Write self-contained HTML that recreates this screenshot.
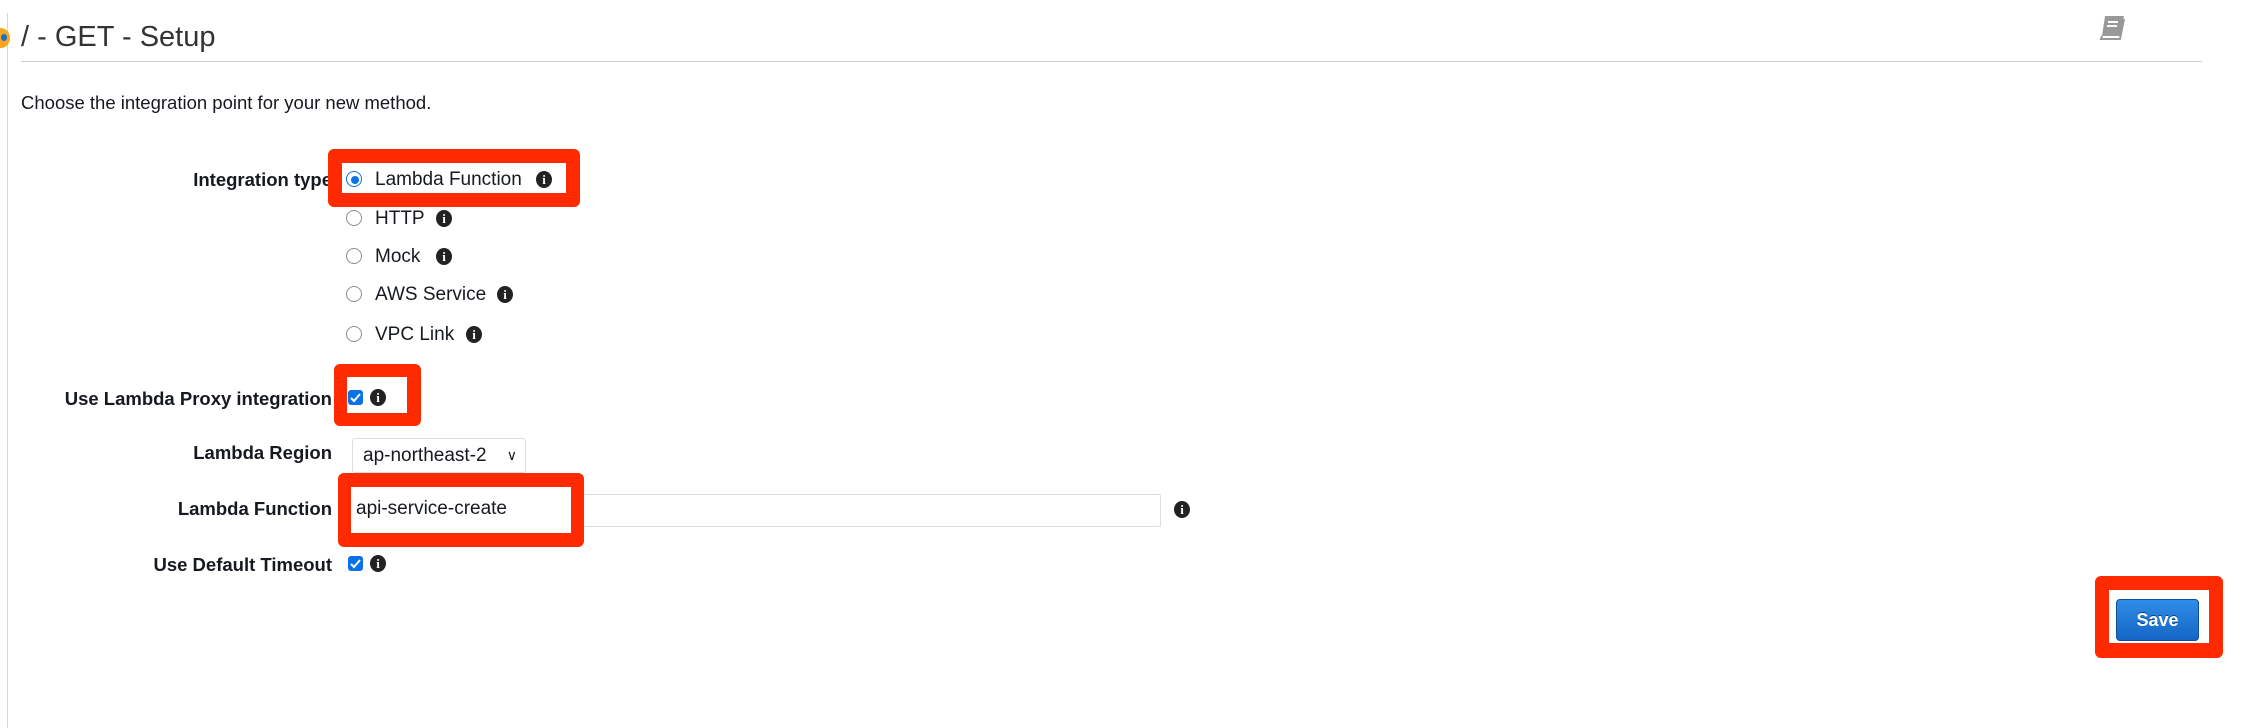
<!DOCTYPE html>
<html><head><meta charset="utf-8"><style>
body{margin:0;width:2264px;height:728px;background:#fff;font-family:"Liberation Sans",Arial,sans-serif;color:#16191f;position:relative;overflow:hidden}
.a{position:absolute}
.lbl{position:absolute;font-weight:bold;font-size:18.5px;text-align:right;width:320px;left:12px;line-height:22px}
.red{position:absolute;border-style:solid;border-color:#ff2a00;border-radius:6px;background:#fff}
.radio{position:absolute;width:14px;height:14px;border:1.5px solid #8d8d99;border-radius:50%;background:#fff}
.opt{position:absolute;font-size:19px;line-height:22px}
.info{position:absolute;width:16px;height:17px;border-radius:50%;background:#222;color:#fff;font:bold 13px/17px "Liberation Serif",serif;text-align:center}
.cb{position:absolute;width:15px;height:15px;border-radius:3px;background:#0a72e8}
.cb svg{position:absolute;left:2px;top:2px}
</style></head><body>
<div class="a" style="left:7px;top:13px;width:1px;height:715px;background:#d5d5d5"></div>
<div class="a" style="left:-8px;top:28px;width:18px;height:20px;border-radius:50%;background:#f5a623"></div>
<div class="a" style="left:1px;top:34px;width:6px;height:7px;border-radius:50%;background:#1a6fd1"></div>
<div class="a" style="left:21px;top:20px;font-size:29px;color:#333;line-height:34px">/ - GET - Setup</div>
<div class="a" style="left:21px;top:61px;width:2181px;height:1px;background:#cfcfcf"></div>
<svg class="a" style="left:2099px;top:14px" width="27" height="27" viewBox="0 0 27 27"><path d="M6 2h19l-4 20H3z" fill="#999"/><path d="M3 22l-1 3h19l4-20" fill="none" stroke="#999" stroke-width="2"/><path d="M9 8h10M8 12h10" stroke="#fff" stroke-width="2"/></svg>
<div class="a" style="left:21px;top:92px;font-size:18.5px;line-height:22px">Choose the integration point for your new method.</div>

<div class="lbl" style="top:169px">Integration type</div>
<div class="red" style="left:328px;top:149px;width:224px;height:30px;border-width:14px 14px 14px 14px"></div>
<div class="radio" style="left:346px;top:171px;border-color:#0a72e8"></div>
<div class="a" style="left:351px;top:176px;width:8px;height:8px;border-radius:50%;background:#0a72e8"></div>
<div class="opt" style="left:375px;top:169px">Lambda Function</div>
<div class="info" style="left:536px;top:171px">i</div>

<div class="radio" style="left:346px;top:210px"></div><div class="opt" style="left:375px;top:208px">HTTP</div><div class="info" style="left:436px;top:210px">i</div>
<div class="radio" style="left:346px;top:248px"></div><div class="opt" style="left:375px;top:246px">Mock</div><div class="info" style="left:436px;top:248px">i</div>
<div class="radio" style="left:346px;top:286px"></div><div class="opt" style="left:375px;top:284px">AWS Service</div><div class="info" style="left:497px;top:286px">i</div>
<div class="radio" style="left:346px;top:326px"></div><div class="opt" style="left:375px;top:324px">VPC Link</div><div class="info" style="left:466px;top:326px">i</div>

<div class="lbl" style="top:388px">Use Lambda Proxy integration</div>
<div class="red" style="left:334px;top:364px;width:60px;height:36px;border-width:13px 14px 13px 13px"></div>
<div class="cb" style="left:348px;top:390px"><svg width="11" height="11"><path d="M1 6l3 3 6-7" stroke="#fff" stroke-width="2" fill="none"/></svg></div>
<div class="info" style="left:370px;top:389px">i</div>

<div class="lbl" style="top:442px">Lambda Region</div>
<div class="a" style="left:352px;top:438px;width:172px;height:33px;border:1px solid #ddd;border-radius:3px;font-size:19px;line-height:33px;text-indent:10px">ap-northeast-2<span style="position:absolute;right:8px;font-size:14px">&#x2228;</span></div>

<div class="lbl" style="top:498px">Lambda Function</div>
<div class="a" style="left:352px;top:494px;width:807px;height:31px;border:1px solid #ddd;border-radius:2px"></div>
<div class="red" style="left:338px;top:473px;width:220px;height:46px;border-width:14px 13px 14px 13px"></div>
<div class="a" style="left:356px;top:498px;font-size:19px;line-height:22px">api-service-create</div>
<div class="info" style="left:1174px;top:501px">i</div>

<div class="lbl" style="top:554px">Use Default Timeout</div>
<div class="cb" style="left:348px;top:556px"><svg width="11" height="11"><path d="M1 6l3 3 6-7" stroke="#fff" stroke-width="2" fill="none"/></svg></div>
<div class="info" style="left:370px;top:555px">i</div>

<div class="red" style="left:2095px;top:576px;width:100px;height:53px;border-width:14px 14px 15px 14px"></div>
<div class="a" style="left:2116px;top:599px;width:81px;height:40px;border:1px solid #0e4f9c;border-radius:4px;background:linear-gradient(#2e8ee8,#1566c4);color:#fff;font-weight:bold;font-size:18px;line-height:40px;text-align:center;text-shadow:0 -1px 0 #0a3f80">Save</div>
</body></html>
